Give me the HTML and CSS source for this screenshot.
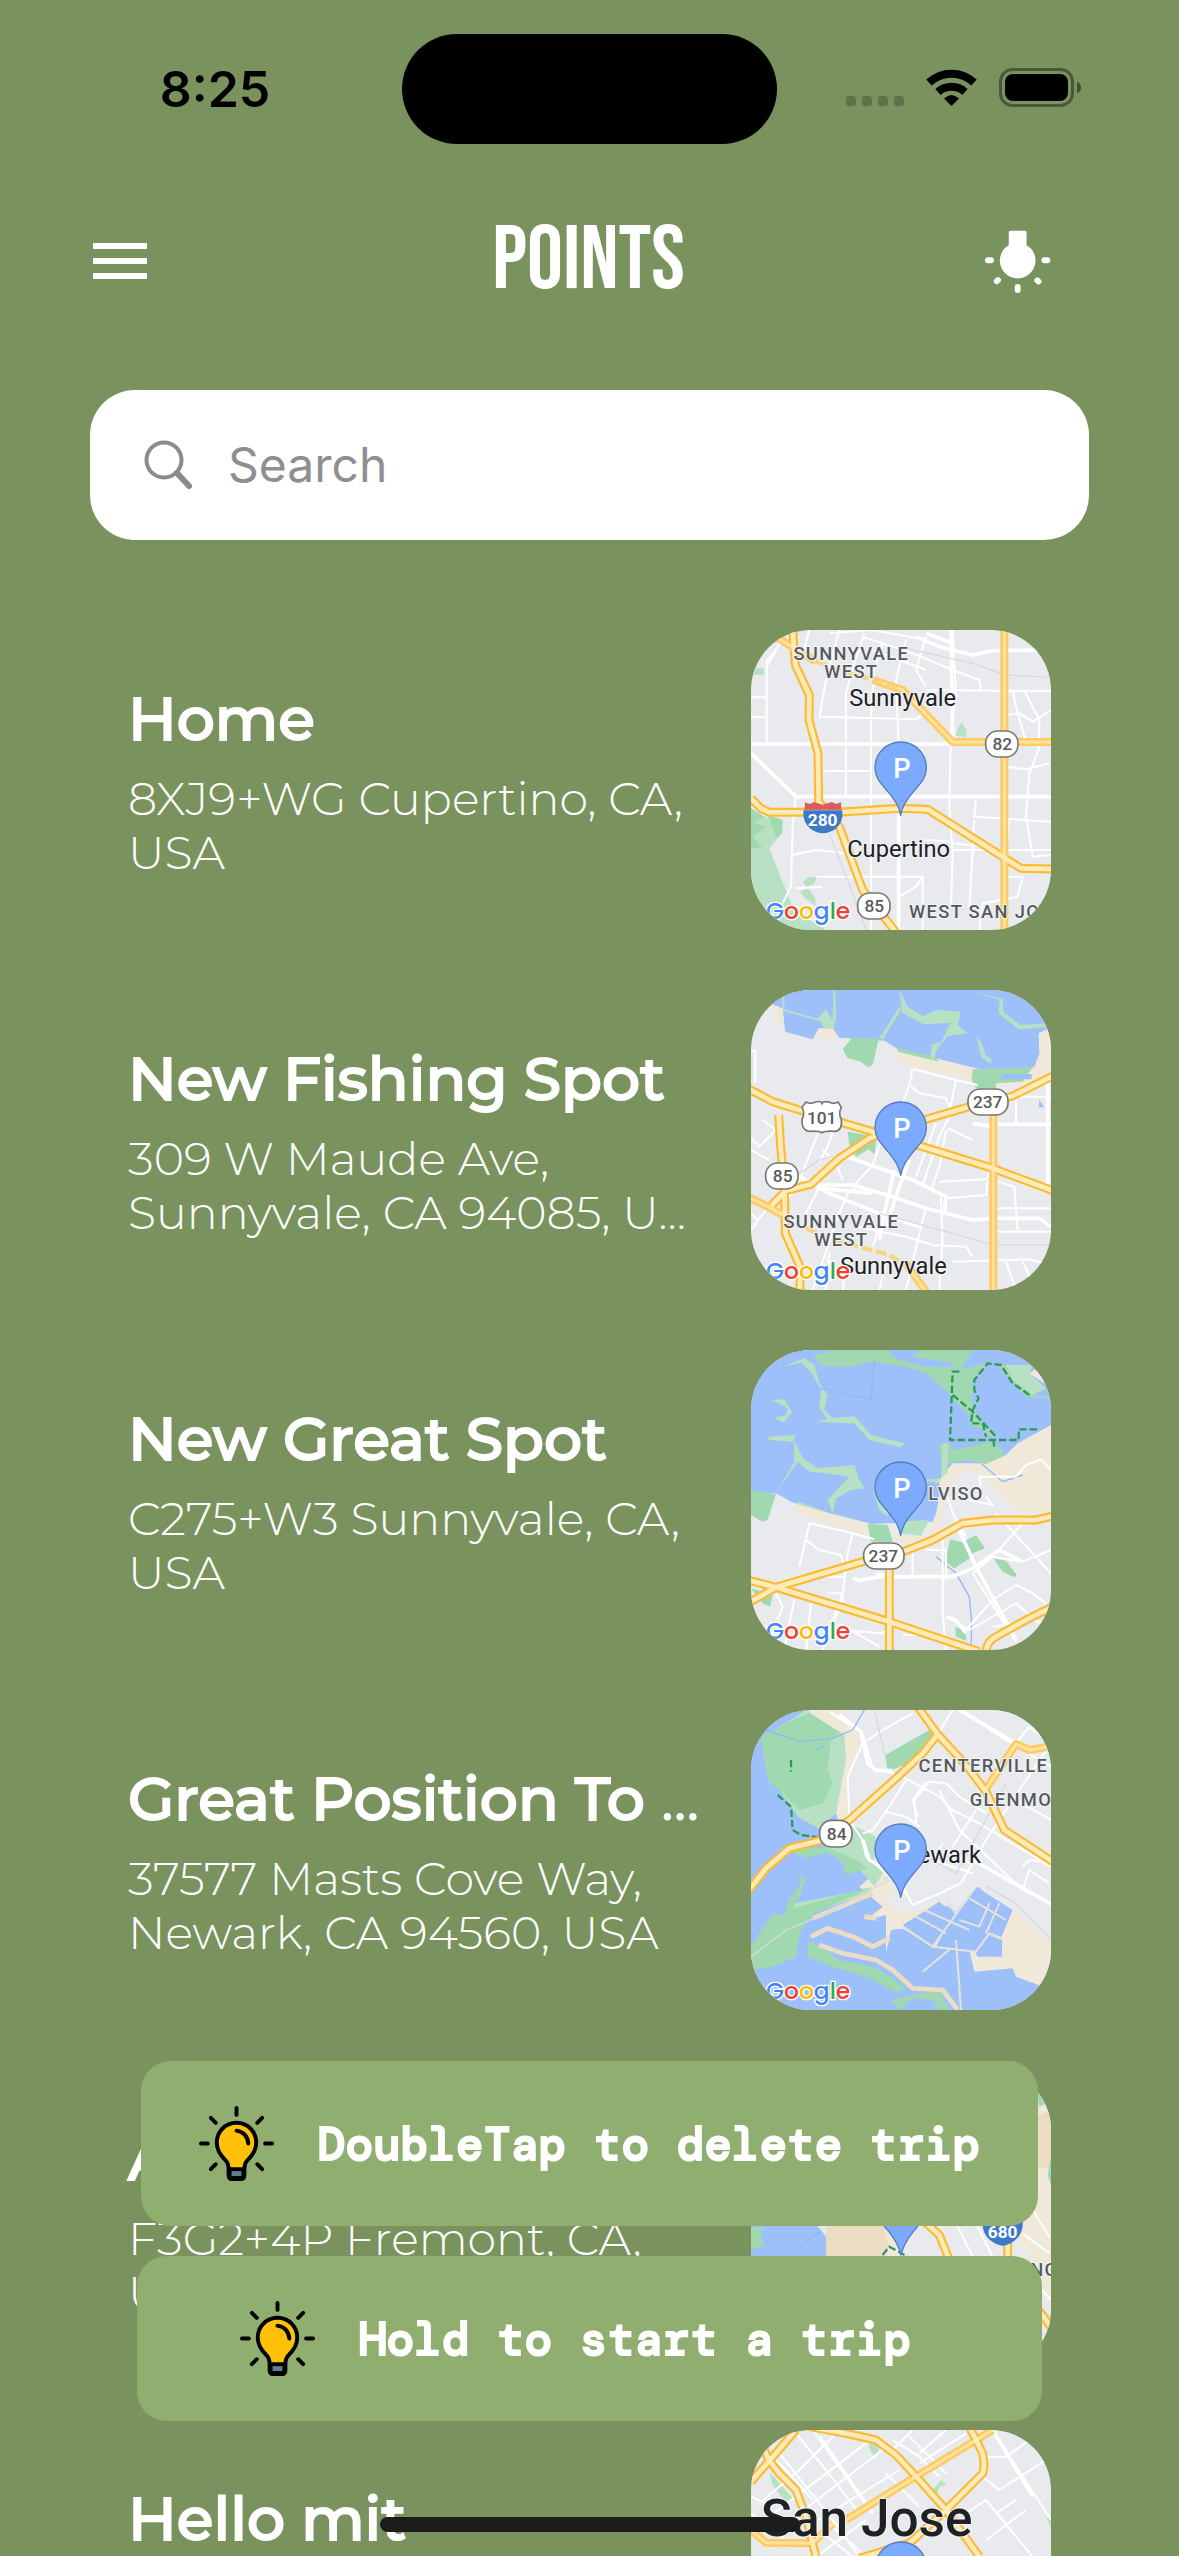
FILE: index.html
```html
<!DOCTYPE html>
<html lang="en">
<head>
<meta charset="utf-8">
<meta name="viewport" content="width=device-width, initial-scale=1">
<title>Points</title>
<link rel="stylesheet" href="styles.css">
</head>
<body>
<svg class="sprite" aria-hidden="true">
  <defs>
    <path id="pin" d="M484 587 C480 560 468 543 450 520 C425 490 407 475 407 443 A77 77 0 0 1 561 443 C561 475 543 490 518 520 C500 543 488 560 484 587Z"/>
    <g id="bulb">
      <path d="M38 17c-12 0-20 10-20 20 0 10 6 15 9 18 3 3 3 6 3 9v6c0 3 2 4 4 4h8c2 0 4-1 4-4v-6c0-3 0-6 3-9 3-3 9-8 9-18 0-10-8-20-20-20z" fill="#ffc107" stroke="#000" stroke-width="4"/>
      <path d="M29 62h18v9q0 5-4 5h-10q-4 0-4-5z"/>
      <path d="M33 66h10v5h-10z" fill="#607d8b"/>
      <path d="M38 25q11 2 12 13M38 2v7M12 12l5 5M64 12l-5 5M2 38h7M67 38h7M12 64l5-5M64 64l-5-5" fill="none" stroke="#000" stroke-width="4" stroke-linecap="round"/>
    </g>
  </defs>
</svg>

<div class="screen">
  <div class="status">
    <time class="clock">8:25</time>
    <div class="island"></div>
    <svg class="indicators" viewBox="0 0 240 42" aria-hidden="true">
      <g fill="#000" fill-opacity=".22">
        <rect x="6" y="28" width="10" height="10" rx="3"/><rect x="22" y="28" width="10" height="10" rx="3"/><rect x="38" y="28" width="10" height="10" rx="3"/><rect x="54" y="28" width="10" height="10" rx="3"/>
      </g>
      <g fill="none" stroke="#000" stroke-width="8">
        <path d="M89 14.500a33 33 0 0 1 45 0"/>
        <path d="M98 24a20 20 0 0 1 27 0"/>
      </g>
      <path d="M104 30.500q7.500-7 15 0L111.500 38z"/>
      <rect x="160.500" y="1.500" width="72" height="36" rx="12" fill="none" stroke="#000" stroke-opacity=".4" stroke-width="3"/>
      <rect x="165" y="6" width="63" height="27" rx="8"/>
      <path d="M237 13.500q4 2 4 6t-4 6z" fill-opacity=".45"/>
    </svg>
  </div>

  <header class="topbar">
    <button class="icon-btn" type="button" aria-label="Menu">
      <svg class="menu-icon" viewBox="0 0 54 36"><path d="M0 0h54v6H0zM0 15h54v6H0zM0 30h54v6H0z" fill="#fff"/></svg>
    </button>
    <h1 class="title">POINTS</h1>
    <button class="icon-btn icon-btn-end" type="button" aria-label="Tips">
      <svg class="lamp-icon" viewBox="40 55 204 200"><g fill="#fff"><path d="M114 68q0-5 5-5h44q5 0 5 5v39a54 54 0 1 1-54 0z"/><rect x="42" y="144" width="27" height="18" rx="9"/><rect x="213" y="144" width="27" height="18" rx="9"/><rect x="132" y="225" width="18" height="27" rx="9"/><rect x="68" y="206" width="23" height="18" rx="9" transform="rotate(-45 79 215)"/><rect x="191" y="206" width="23" height="18" rx="9" transform="rotate(45 202 215)"/></g></svg>
    </button>
  </header>

  <label class="search">
    <svg class="search-icon" viewBox="0 0 48 50" aria-hidden="true"><g fill="none" stroke="#8a8a8f"><circle cx="20" cy="20" r="17.500" stroke-width="4"/><path d="M33 33l12 13" stroke-width="6" stroke-linecap="round"/></g></svg>
    <input class="search-input" type="search" placeholder="Search" aria-label="Search">
  </label>

  <main class="list">
    <article class="row">
      <div class="info"><h2 class="name">Home</h2><p class="address">8XJ9+WG Cupertino, CA,<br>USA</p></div>
      <svg class="map" viewBox="35 30 900 900" role="img" aria-label="Map of Home">
        <defs><g id="m1"><path d="M160 30L168 135L210 225L209 300L236 400L238 545L300 620L370 810L480 950"/><path d="M35 535L65 565L90 577L310 576L480 565L565 568L845 745L940 747"/></g><g id="a1"><path d="M110 50L165 85L230 125"/><path d="M795 30V360L795 940"/><path d="M400 180L490 210L640 366H940"/></g></defs>
        <path class="park" d="M35 565L70 590L130 600L128 640L90 685L155 850L210 900L260 930H35zM190 785l15-12 30-2-12 22-22 6zM182 815l24-10 22 30v22l-28-20zM655 325l12-18 15 22-2 22-30-4zM35 140l38 6v18H35z"/>
        <path class="park-dark" d="M35 565L75 590L45 610L80 620L40 650L70 685H35zM85 585L130 600L128 640L112 655z"/>
        <g class="minor"><path d="M130 60L82 125V370M35 232H82M35 292H82M80 145L110 90M300 30L262 170L240 290L300 292L530 298L560 275M210 30L195 85M375 40L345 130L320 220V530M430 70L405 150L395 290V930M500 60L470 180L478 370V930M560 50L530 150L560 200M640 30L650 230L635 330L630 560L640 700L635 860M270 40L400 30L560 60M370 50L520 100L640 150L720 180L725 215M400 90L560 150M560 210L770 212H935M800 285L840 280L880 305L935 270M820 212L835 280L860 365M855 212L900 300L898 390L870 460L860 590L880 710L935 705M35 372H790M250 453H390M180 530H935M800 440L860 448L930 430M35 400L80 440L170 530L160 620L155 800L130 850M160 705L230 690L320 700M230 770H550V930M250 800L170 805M640 690H935M710 540L705 590L935 605M705 600L690 870M810 600L800 690M480 830L530 800L550 770M560 660L640 665M640 670L730 680M800 770H850L835 830L730 850L720 930"/></g>
        <g class="minor minor-wide"><path d="M530 50L600 80L700 105L760 92L935 90M560 40L640 70M35 372H640M165 530H935M478 590V940M35 400L170 530M635 30L640 360"/></g>
        <path class="rail" d="M500 85L700 130L800 165L935 172M270 640L340 820L380 930"/>
        <use href="#m1" class="casing"/><use href="#a1" class="casing soft"/><use href="#a1" class="core thin"/><use href="#m1" class="core"/>
        <path class="dash" d="M230 125L300 150L480 205"/>
        <text class="area" x="336" y="120">SUNNYVALE</text><text class="area" x="336" y="175">WEST</text>
        <text class="city" x="490" y="258">Sunnyvale</text><text class="city" x="478" y="712">Cupertino</text><text class="area" x="706" y="894">WEST SAN JO</text>
        <rect class="shield" x="739" y="333" width="97" height="78" rx="36"/><text class="num" x="789" y="391">82</text>
        <rect class="shield" x="355" y="819" width="97" height="78" rx="36"/><text class="num" x="405" y="877">85</text>
        <path d="M197 547l15 5 12-6 26 8 27-8 13 6 15-5 1 22H196z" fill="#d95c5c"/><path d="M192 571h117q4 36-20 55-19 13-38 14-21-2-38-14-24-19-21-55z" fill="#3e78c9"/><text class="num inverse" x="250" y="619">280</text>
        <use href="#pin" class="pin"/><text class="pin-text" x="488" y="473">P</text>
        <text class="brand" x="80" y="897">G<tspan class="r">o</tspan><tspan class="y">o</tspan>g<tspan class="g">l</tspan><tspan class="r">e</tspan></text>
      </svg>
    </article>

    <article class="row">
      <div class="info"><h2 class="name">New Fishing Spot</h2><p class="address">309 W Maude Ave,<br>Sunnyvale, CA 94085, U...</p></div>
      <svg class="map" viewBox="35 30 900 900" role="img" aria-label="Map of New Fishing Spot">
        <defs><g id="m2"><path d="M25 325L100 365L190 393L400 455L550 500L760 565L940 632"/><path d="M940 288L820 348L690 380L560 418L430 460L390 475L300 535L215 613L140 632L95 678"/><path d="M118 405L124 500L135 620L138 760L182 860V940"/></g><g id="a2"><path d="M762 400V940M25 650L85 680L130 705M500 850L560 935"/></g></defs>
        <path class="sand" d="M90 70L130 85L145 155L220 150L290 140L310 175L430 180L520 210L700 265L780 300L850 290L890 240L905 150L935 140V300L800 320L690 300L520 262L470 240L475 210L420 185L290 170L220 172L130 155z"/>
        <path class="water" d="M90 70L130 30H940V140L898 160L900 220L885 262L740 272L590 235L480 210L435 182L300 173L280 145L238 145L220 178L138 155L130 85z"/>
        <path class="park-dark" d="M340 172L418 176L400 255L385 262L365 245L325 235L310 208zM700 268L880 262L850 305L770 310V325H710L697 300zM325 455L412 470L405 522L388 508L350 530L330 495zM475 205L590 232L600 245L475 215z"/>
        <path class="park" d="M128 30h7v58l100 28 25-28 15 25 12 30-32 3-12-22L130 92zM282 30h6l3 90-12 20zM420 175l60-95 6 8-55 90zM480 30l25 50 45 28 45-18 70 5-10 40 30 25-60 8-35 45-5 28-12-8 5-40 30-10 25-55-80 5-65-35zM710 165l20 30 8 30 18 12v15l-30-20zM700 35l90 22 3 40 50 38 90-5-5 10-90 8-60-48 3-40z"/>
        <path class="water" d="M785 282h92v16h-92zM900 360l15 22h-17z"/>
        <g class="minor"><path d="M35 212H48V310M520 265L510 315L490 370M525 268L650 300L715 315M510 315L540 340L620 355L630 380M650 300L625 420L600 470L550 615M620 450L600 560L575 630M590 430L530 590M625 445L700 480M35 475L60 500L110 450L70 420M35 510L90 540M240 450L180 600L120 700M280 455L265 500L240 545M250 510L290 550L310 600M400 555L350 610L340 640M430 470L400 555M600 605L740 598L750 580M620 655L740 645L745 600M605 650L610 800M760 600L825 620L835 750M35 750L80 690L130 690M35 700L55 720M240 620L200 700M330 630L300 700L220 930M440 680L400 800M560 680L500 930M610 760L600 930M350 740L500 770L580 795L680 800L700 830M760 685H935M800 845L830 930M850 845L880 910M640 845L870 838L935 855M770 755H935M830 350V430M830 350H935M440 845L420 930M270 820L260 930M320 850L310 930"/></g>
        <g class="minor minor-wide"><path d="M770 433H935M700 430L760 440M310 525L450 575L520 600L620 650L615 700M220 615L340 615L460 650L560 685L700 720L760 715H900L935 740M180 590L270 640L420 700L540 740M465 570L435 700L420 780M510 540L480 620L440 740M925 310V620M240 625L400 640"/></g>
        <path class="rail" d="M180 580L240 540L280 530M420 700L640 760L760 795H935"/>
        <use href="#m2" class="casing"/><use href="#a2" class="casing soft"/><use href="#a2" class="core thin"/><use href="#m2" class="core"/>
        <path class="dash" d="M200 745L270 775L450 825L500 855"/>
        <text class="area" x="306" y="744">SUNNYVALE</text><text class="area" x="306" y="798">WEST</text><text class="city" x="462" y="882">Sunnyvale</text>
        <rect class="shield" x="686" y="327" width="120" height="78" rx="36"/><text class="num" x="745" y="385">237</text>
        <rect class="shield" x="79" y="549" width="97" height="78" rx="36"/><text class="num" x="130" y="606">85</text>
        <path class="shield" d="M200 366q15 8 28 0 18-4 20 4 4-8 22-4 12 8 26 0l10 16q-10 18 0 36 4 34-20 36-28-2-38 4-12-6-40-4-22-4-20-36 10-18 0-36z"/><text class="num" x="247" y="433">101</text>
        <use href="#pin" class="pin"/><text class="pin-text" x="488" y="473">P</text>
        <text class="brand" x="80" y="897">G<tspan class="r">o</tspan><tspan class="y">o</tspan>g<tspan class="g">l</tspan><tspan class="r">e</tspan></text>
      </svg>
    </article>

    <article class="row">
      <div class="info"><h2 class="name">New Great Spot</h2><p class="address">C275+W3 Sunnyvale, CA,<br>USA</p></div>
      <svg class="map" viewBox="35 30 900 900" role="img" aria-label="Map of New Great Spot">
        <defs><g id="m3"><path d="M25 790L110 742L380 662L500 632L580 600L670 550L760 540H890L940 528"/><path d="M25 720L110 742L450 845L720 935"/><path d="M940 800L860 840L770 890Q740 905 740 940"/></g><g id="a3"><path d="M450 680V940"/></g></defs>
        <path class="water" d="M35 30H935V270L860 300L780 360L610 420L585 545L385 552L165 490L110 460H35z"/>
        <path class="sand" d="M165 490L270 520L390 550V590L170 520zM445 580L560 590L600 500V420L640 370L720 370L800 345L835 310L935 255V525L830 510L790 470L720 400L690 390L620 480L600 570L500 620zM870 100L930 60V140z"/>
        <path class="park-dark" d="M35 452L110 462L85 540L70 545L35 525zM220 45L280 30H440L480 60L520 70L500 80L400 65L330 80L250 78zM480 60L560 80H640V170L560 100L500 80zM540 30H640V70L520 50zM640 95L700 80L750 65L700 120V200L770 300L740 280L635 170zM770 68L800 75L830 130L880 165L935 170V175L860 170L820 130zM600 310H630L640 330L760 305L800 345L740 372L690 360L625 370L610 410zM385 552L445 555L460 605H395zM632 598L680 610L692 655L645 685L618 665zM668 608L710 585L737 625L695 642zM762 655L800 662L832 705L825 712L790 695zM648 862L680 870V902L650 890zM35 745L100 765L92 800L70 790zM640 30H700L665 90L640 85zM690 240L710 230L740 260L700 262z"/>
        <path class="park" d="M130 80L195 55L225 75L240 130L265 165L255 210L280 235L345 228L395 285L495 310L485 322L390 300L345 250L230 245L265 238L240 205L245 150L215 95L185 68zM100 180L135 178L158 215L135 248L105 235L140 225L145 205zM68 255L85 290L170 285L160 305L90 300zM165 300L190 355L235 385L345 375L358 415L375 445L335 450L290 475L280 520L265 480L330 410L260 400L210 395L175 365L110 460L165 365zM165 490L270 520L300 530L180 485zM800 75H880L870 100L920 145L880 165L820 120zM610 310H625V400L605 410zM470 545L570 540L545 588L480 580zM400 450L445 500V530L420 510zM550 420L600 415V430z"/>
        <path class="trail" d="M660 95H640L632 300H838V268H900M640 165L700 215L770 290M765 320L760 290M870 165L820 130L785 75L745 70L705 120V150L718 175L700 210L695 250H730L740 290"/>
        <path class="stream" d="M590 650L650 700L690 770L697 850L695 930M725 370L790 425L850 405M240 145L395 178L405 60"/>
        <path class="urban" d="M640 420L690 388L730 440L830 515L750 525L650 540z"/>
        <g class="minor"><path d="M210 550L200 595L180 680M340 580L325 640L310 760L270 870M210 550L340 580L405 598M200 600L240 630L305 645L315 680M320 710H210M110 760L130 800L95 890M165 780L150 850L135 930M215 790L200 930M265 760H310V790L270 870L250 930M520 630V710M300 870L430 880L460 850M300 850L420 920M560 630H620V720M610 600V820L620 930M700 700L760 650L850 665L935 630M850 550L770 640M770 520L935 700M725 440L720 410L830 410L860 375L905 358L935 390M690 480L760 495L740 470M625 470L640 520L680 590M830 735L880 760L920 790M760 780L830 735M680 870L760 780M700 700L830 905M640 840L690 870L830 790L900 850M490 885H620M410 700L500 715M760 860L830 850"/></g>
        <g class="minor minor-wide"><path d="M340 715L360 722L420 710H640L700 685L780 630M650 550L710 680L830 900M780 630L850 665M620 830L650 840L680 880"/></g>
        <use href="#a3" class="casing"/><use href="#m3" class="casing"/><use href="#a3" class="core"/><use href="#m3" class="core"/>
        <text class="area" x="650" y="480">LVISO</text>
        <rect class="shield" x="373" y="609" width="121" height="78" rx="36"/><text class="num" x="432" y="667">237</text>
        <use href="#pin" class="pin"/><text class="pin-text" x="488" y="473">P</text>
        <text class="brand" x="80" y="897">G<tspan class="r">o</tspan><tspan class="y">o</tspan>g<tspan class="g">l</tspan><tspan class="r">e</tspan></text>
      </svg>
    </article>

    <article class="row">
      <div class="info"><h2 class="name">Great Position To <span class="more">...</span></h2><p class="address">37577 Masts Cove Way,<br>Newark, CA 94560, USA</p></div>
      <svg class="map" viewBox="35 30 900 900" role="img" aria-label="Map of Great Position">
        <defs><g id="m4"><path d="M25 575L80 505L150 445L240 422L330 360L470 235L550 160L595 103"/><path d="M535 20L595 103L680 195L740 275L795 390L940 485"/></g><g id="a4"><path d="M738 270L830 132L870 150L940 138"/></g></defs>
        <path class="water" d="M35 30H220L320 130L340 370L430 590L450 680L500 690L720 560L940 860V940H35z"/>
        <path class="sand" d="M205 30H460L410 110L350 150L330 360L310 420L290 340L310 130L240 70zM360 560L430 500L500 640L560 620L600 600L680 700L710 560L820 630H850L940 730V870L830 830L820 805L705 815L690 750L580 740L490 685L455 690L440 760V645L380 660L430 620z"/>
        <path class="urban" d="M310 30H940V735L830 630L710 555L660 640L600 605L485 635L440 600L500 560L400 480L335 350L325 250L370 130z"/>
        <path class="park" d="M65 110L130 75L200 30L315 105L320 180L290 340L240 385L180 355L120 270L85 240zM330 370L410 410L405 480L430 520L405 560L345 490L250 450L300 420zM165 610L400 565L390 580L230 635L150 690L60 760L35 790V740z"/>
        <path class="park-dark" d="M65 110L150 65L210 40L315 105L300 100L275 120L265 210L280 250L250 310L180 330L120 270L85 240zM438 165L570 90L590 110L520 190L480 200L445 215zM35 740L100 640L130 650L150 600L190 540L170 525L200 530L185 580L160 625L400 560L225 640L180 700L170 770L100 800L35 810zM140 450L260 440L350 480L385 505L320 525L310 490L270 455L200 475zM205 725L240 735L300 780L400 800L470 840L500 870L470 875L380 830L280 800L205 770zM455 900L500 890L600 870L630 930H600L580 900L520 895L480 930z"/>
        <path class="sand-line" d="M215 710L265 685L340 710L400 740L450 715M240 735L310 760L410 780L460 810L520 865L610 870L655 930M220 655L340 605L400 580M375 650L410 655"/>
        <path class="water" d="M490 675L600 605L650 645L580 740zM635 655L710 560L820 630L785 715L745 705L710 755L590 740z"/>
        <path class="water" d="M705 750L745 705L788 720V770H715z"/>
        <g class="sand-thin"><path d="M490 680L580 740L710 755L750 700L790 715M710 560L580 740M690 595L800 660M620 600L650 640M750 610L720 680L660 660M650 720L665 930M635 745L550 815M530 650L620 700M555 630L690 690M780 610L740 700"/></g>
        <g class="minor"><path d="M270 35L370 100L400 205L480 225L600 290L640 330L720 370L935 500M330 350L325 230L370 130L430 90L520 40M640 30L600 95M330 360L370 420L380 470L490 560L520 615L600 580L665 550L740 420L860 240L935 130M500 240L440 335L400 390L370 400M440 335L500 350L540 380M530 370L525 300L570 245L620 250L660 290L740 340M610 430L580 480L700 520M670 30L760 90L830 130L870 80L935 130M560 245L520 300L535 350M600 270L660 390L850 570L935 610M710 330L640 440M850 570L870 510L930 550M850 500L870 480L935 490M830 300L935 360M630 450L690 490M750 90L935 200"/></g>
        <g class="minor minor-wide"><path d="M300 45L365 95L385 190L410 212H460M660 30L830 130M700 480L935 612M370 420L390 480L480 530"/></g>
        <path class="rail" d="M405 30L440 180M35 770L140 690L260 640L450 540M430 540L560 470L650 520L800 250M740 560L830 610L935 720"/>
        <path class="stream" d="M375 30L340 90L280 115L180 125L80 90M230 150l20-12"/>
        <path class="trail" d="M115 285L155 320L160 390L185 405L240 412M155 180v35"/>
        <use href="#a4" class="casing soft"/><use href="#m4" class="casing"/><use href="#a4" class="core thin"/><use href="#m4" class="core"/>
        <text class="area" x="732" y="216">CENTERVILLE</text><text class="area" x="815" y="317">GLENMO</text><text class="city" x="630" y="490">ewark</text>
        <rect class="shield" x="241" y="361" width="97" height="80" rx="36"/><text class="num" x="292" y="420">84</text>
        <g transform="translate(0 6)"><use href="#pin" class="pin"/><text class="pin-text" x="488" y="473">P</text></g>
        <text class="brand" x="80" y="897">G<tspan class="r">o</tspan><tspan class="y">o</tspan>g<tspan class="g">l</tspan><tspan class="r">e</tspan></text>
      </svg>
    </article>

    <article class="row">
      <div class="info"><h2 class="name">A</h2><p class="address">F3G2+4P Fremont, CA,<br>USA</p></div>
      <svg class="map" viewBox="455 90 900 900" role="img" aria-label="Map of Fremont">
        <defs><g id="m5"><path d="M970 540L1020 585L1050 660L1100 760"/><path d="M1225 520V660L1280 760L1340 840L1380 900"/></g></defs>
        <path class="sand" d="M680 500H900L890 650H680zM1270 90H1355V800L1290 640L1220 560z"/>
        <path d="M1300 235L1355 210V383H1300zM680 540H850L870 620L845 650H680z" fill="#ecdcc3"/>
        <path class="water" d="M455 540H640L680 590V700H455z"/>
        <path class="park-dark" d="M455 565L490 560L485 595L495 615L455 632zM1355 350l-10 55 10 30zM1310 150l30 40-20 10z"/>
        <path class="stream" d="M565 645L660 575"/><path class="trail" d="M850 645L870 620L925 650"/>
        <g class="minor"><path d="M1070 550L1120 650M1130 550L1180 650M1300 510L1350 590M1270 580L1350 640M1300 720L1355 780"/></g>
        <use href="#m5" class="casing"/><use href="#m5" class="core"/>
        <path class="pin" d="M905 646C900 620 888 600 870 577C845 547 828 530 828 500H982C982 530 965 547 940 577C922 600 910 620 905 646Z"/>
        <path d="M1150 540h120q4 38-22 60-18 16-38 17-20-2-38-17-26-22-22-60z" fill="#3e78c9"/><text class="num inverse" x="1210" y="595">680</text>
        <text class="area" x="1335" y="708">NG</text>
      </svg>
    </article>

    <article class="row">
      <div class="info"><h2 class="name">Hello mit</h2></div>
      <svg class="map" viewBox="455 1170 900 900" role="img" aria-label="Map of San Jose">
        <defs><g id="m6"><path d="M455 1325L510 1262L590 1170"/><path d="M490 1220L510 1262L540 1300L590 1350L620 1430L650 1550"/><path d="M630 1160L740 1180L830 1200L890 1245L960 1320L1040 1410L1140 1550"/><path d="M1110 1160L1150 1240Q1158 1280 1150 1300L1040 1410L930 1510L780 1555"/></g><g id="a6"><path d="M740 1440L900 1340L1180 1170M455 1470L500 1508L640 1510L700 1450"/></g></defs>
        <path class="park" d="M815 1200L838 1215V1240L820 1245L808 1220zM1000 1350L1025 1320L1042 1335L1020 1340L1010 1375zM510 1295L550 1340L580 1375L565 1395L520 1335zM1342 1435l13-5v35z"/>
        <g class="minor"><path d="M455 1370L520 1400M500 1230L560 1290L640 1380M540 1240L700 1440L780 1550M590 1180L680 1290L780 1420M640 1170L820 1420M480 1390L600 1290L720 1170M510 1430L800 1210M560 1450L850 1230M640 1450L900 1290M860 1300L960 1400M880 1200L960 1250L1020 1310M940 1170L880 1230M1040 1170L960 1240M930 1190L1040 1300M960 1270L1100 1180M1160 1250H1220L1320 1180M1180 1170L1355 1440M1150 1310L1200 1350L1355 1250M1100 1420L1160 1380L1300 1550M1160 1500L1280 1410M1190 1420L1250 1380M660 1470L760 1550M700 1460L800 1550M650 1550L800 1440M455 1420L560 1500"/></g>
        <g class="minor minor-wide"><path d="M660 1190L820 1420M1180 1170L1300 1370"/></g>
        <use href="#a6" class="casing soft"/><use href="#m6" class="casing"/><use href="#a6" class="core thin"/><use href="#m6" class="core"/>
        <text class="city city-large" x="802" y="1487">San Jose</text>
        <use href="#pin" class="pin" x="421" y="1140"/>
      </svg>
    </article>
  </main>

  <aside class="toasts">
    <div class="toast"><svg class="bulb" viewBox="0 0 76 76" aria-hidden="true"><use href="#bulb"/></svg><span>DoubleTap to delete trip</span></div>
    <div class="toast toast-wide"><svg class="bulb" viewBox="0 0 76 76" aria-hidden="true"><use href="#bulb"/></svg><span>Hold to start a trip</span></div>
  </aside>
  <div class="home-indicator"></div>
</div>
</body>
</html>
```
FILE: styles.css
```css
* { box-sizing: border-box; }

body {
  margin: 0;
  background: #7a935e;
  color: #fff;
  font-family: "Montserrat", Inter, "Open Sans", sans-serif;
}

.sprite { position: absolute; width: 0; height: 0; }

.screen {
  display: flex;
  flex-direction: column;
  height: 100vh;
  overflow: hidden;
}

/* Status bar */
.status {
  flex: none;
  display: grid;
  grid-template-columns: 1fr 375px 1fr;
  align-items: center;
  height: 177px;
}
.clock {
  padding-left: 28px;
  text-align: center;
  font: 600 50px/60px Inter, sans-serif;
  color: #000;
}
.island { height: 110px; border-radius: 55px; background: #000; }
.indicators { width: 240px; height: 42px; justify-self: end; margin-right: 99px; overflow: visible; }

/* Header */
.topbar {
  flex: none;
  display: grid;
  grid-template-columns: 1fr auto 1fr;
  align-items: center;
  height: 168px;
  padding: 0 124px 0 90px;
}
.icon-btn {
  display: flex;
  justify-self: start;
  padding: 3px;
  border: 0;
  background: none;
}
.icon-btn-end { justify-self: end; }
.menu-icon { width: 54px; height: 36px; }
.lamp-icon { width: 68px; height: 66px; }
.title {
  margin: 0;
  padding-left: 32px;
  font: 400 90px/90px "Bebas Neue", "Liberation Sans Narrow", sans-serif;
}

/* Search */
.search {
  flex: none;
  display: flex;
  align-items: center;
  gap: 36px;
  height: 150px;
  margin: 45px 90px 90px;
  padding: 0 54px;
  border-radius: 45px;
  background: #fff;
}
.search-icon { flex: none; width: 48px; height: 50px; }
.search-input {
  flex: 1;
  min-width: 0;
  padding: 0;
  border: 0;
  outline: 0;
  background: none;
  color: #333;
  font: 400 48px/60px Inter, sans-serif;
  appearance: none;
}
.search-input::placeholder { color: #8e8e93; opacity: 1; }

/* Saved points */
.list {
  flex: 1;
  min-height: 0;
  display: flex;
  flex-direction: column;
  gap: 60px;
  padding: 0 128px;
  overflow-y: auto;
  scrollbar-width: none;
}
.row { flex: none; display: flex; gap: 32px; justify-content: space-between; }
.info { flex: 1; min-width: 0; padding-top: 53px; white-space: nowrap; }
.name {
  margin: 0 0 17px;
  font-size: 60px;
  line-height: 72px;
  font-weight: 500;
  -webkit-text-stroke: 2px #fff;
}
.more { font-weight: 400; -webkit-text-stroke-width: 1px; }
.address { margin: 0; font-size: 46px; line-height: 54px; font-weight: 300; }

/* Map thumbnails */
.map {
  flex: none;
  width: 300px;
  height: 300px;
  border-radius: 60px;
  background: #e8eaed;
  font-family: Roboto, sans-serif;
}
.water { fill: #9dc0fa; }
.park { fill: #b7e1c2; }
.park-dark { fill: #a0d8b0; }
.sand { fill: #f0e9d9; }
.urban { fill: #e8eaed; }
.minor, .minor-wide, .rail, .stream, .trail, .dash, .casing, .core, .sand-line, .sand-thin {
  fill: none;
  stroke-linejoin: round;
}
.minor { stroke: #fff; stroke-width: 6; }
.minor-wide { stroke-width: 11; }
.rail { stroke: #d8dade; stroke-width: 4; }
.stream { stroke: #90b9f4; stroke-width: 4; }
.trail { stroke: #2f9a56; stroke-width: 7; stroke-dasharray: 22 9; }
.dash { stroke: #fbd27e; stroke-width: 12; stroke-dasharray: 34 10; }
.sand-line { stroke: #ecdcc3; stroke-width: 14; }
.sand-thin { stroke: #e6e3da; stroke-width: 6; }
.casing { stroke: #fbbb35; stroke-width: 27; }
.casing.soft { stroke: #fdcb62; stroke-width: 24; }
.core { stroke: #feebb9; stroke-width: 14; }
.core.thin { stroke: #fee3a0; stroke-width: 9; }
.shield { fill: #fff; stroke: #777; stroke-width: 5; }
.num { font-size: 52px; font-weight: 500; fill: #5a5a5a; text-anchor: middle; }
.num.inverse { fill: #fff; font-weight: 700; }
.area, .city {
  text-anchor: middle;
  font-weight: 500;
  stroke: #f3f4f6;
  stroke-width: 6;
  paint-order: stroke;
}
.area { font-size: 55px; letter-spacing: 4px; fill: #55595e; }
.city { font-size: 71px; font-weight: 400; fill: #202124; }
.city-large { font-size: 154px; font-weight: 500; }
.pin { fill: #7baaff; stroke: #527dbe; stroke-width: 4; }
.pin-text { font-size: 82px; font-weight: 500; fill: #fff; text-anchor: middle; }
.brand {
  font: 500 70px "Product Sans", "Poppins", Roboto, sans-serif;
  fill: #4285f4;
  stroke: #fff;
  stroke-width: 8;
  paint-order: stroke;
}
.r { fill: #ea4335; }
.y { fill: #fbbc05; }
.g { fill: #34a853; }

/* Floating hints */
.toasts {
  position: fixed;
  right: 0;
  bottom: 135px;
  left: 0;
  display: flex;
  flex-direction: column;
  gap: 30px;
}
.toast {
  display: flex;
  align-items: center;
  justify-content: center;
  gap: 44px;
  height: 165px;
  margin: 0 141px;
  border-radius: 30px;
  background: #91ae71;
  font: 500 46px/60px "DM Mono", "DejaVu Sans Mono", monospace;
  -webkit-text-stroke: 2px #fff;
  white-space: nowrap;
}
.toast-wide { margin: 0 137px; padding-right: 28px; }
.bulb { flex: none; width: 75px; height: 75px; }

.home-indicator {
  position: fixed;
  bottom: 24px;
  left: 50%;
  width: 420px;
  height: 15px;
  margin-left: -210px;
  border-radius: 8px;
  background: #1c1c1c;
}
```
